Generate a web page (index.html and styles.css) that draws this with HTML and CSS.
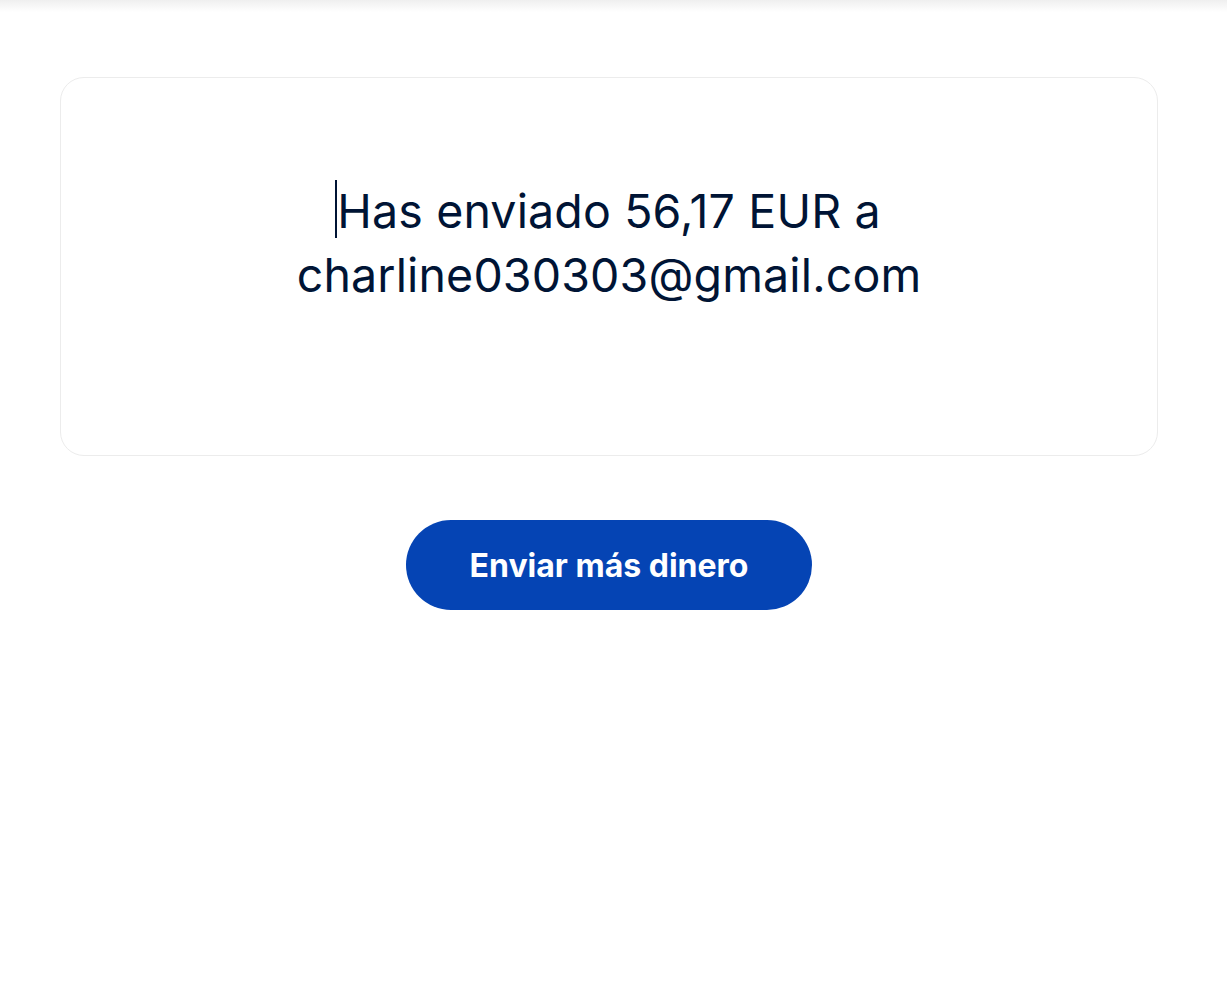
FILE: index.html
```html
<!DOCTYPE html>
<html lang="es">
<head>
    <meta charset="UTF-8">
    <meta name="viewport" content="width=device-width, initial-scale=1.0">
    <title>Pago enviado</title>
    <link rel="stylesheet" href="styles.css">
</head>
<body>

    <div class="top-shadow"></div>

    <main class="page">
        <section class="confirm-card">
            <h1 class="confirm-text"><span class="caret"></span>Has enviado 56,17 EUR a charline030303@gmail.com</h1>
        </section>

        <div class="actions">
            <button class="send-more">Enviar más dinero</button>
        </div>
    </main>

</body>
</html>
```

FILE: styles.css
```css
* {
    margin: 0;
    padding: 0;
    box-sizing: border-box;
}

body {
    background-color: #fff;
    font-family: Inter, "Liberation Sans", sans-serif;
    color: #001435;
}

.top-shadow {
    height: 12px;
    background: linear-gradient(to bottom, #efefef, rgba(255, 255, 255, 0));
}

.page {
    width: 1218px;
    padding: 65px 60px 0;
}

.confirm-card {
    height: 379px;
    border: 1px solid #ececec;
    border-radius: 24px;
    padding: 101px 150px 0;
}

.confirm-text {
    font-size: 46.5px;
    font-weight: normal;
    line-height: 64px;
    letter-spacing: 0.15px;
    text-align: center;
    max-width: 680px;
    margin: 0 auto;
}

.caret {
    display: inline-block;
    position: relative;
    width: 0;
    height: 58px;
    vertical-align: -10px;
}

.caret::before {
    content: "";
    position: absolute;
    left: -2px;
    top: 0;
    width: 2px;
    height: 100%;
    background-color: #001435;
}

.actions {
    display: flex;
    justify-content: center;
    margin-top: 64px;
}

.send-more {
    height: 90px;
    width: 406px;
    border: none;
    border-radius: 45px;
    background-color: #0544b4;
    color: #fff;
    font-family: Inter, "Liberation Sans", sans-serif;
    font-size: 32px;
    font-weight: bold;
    cursor: pointer;
}
```
